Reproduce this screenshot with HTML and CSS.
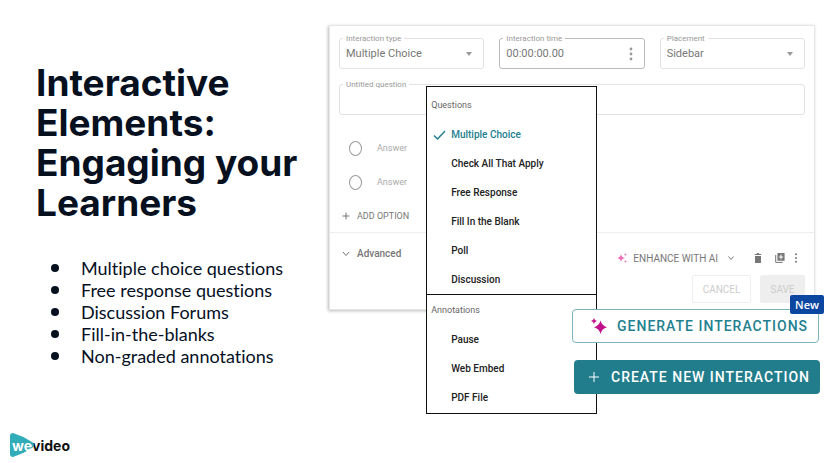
FILE: index.html
```html
<!DOCTYPE html>
<html lang="en">
<head>
  <meta charset="UTF-8">
  <meta name="viewport" content="width=device-width, initial-scale=1.0">
  <title>Interactive Elements</title>
  <link rel="stylesheet" href="styles.css">
</head>
<body>
  <main class="slide">
    <section class="intro">
      <h1>Interactive Elements: Engaging your Learners</h1>
      <ul class="points">
        <li>Multiple choice questions</li>
        <li>Free response questions</li>
        <li>Discussion Forums</li>
        <li>Fill-in-the-blanks</li>
        <li>Non-graded annotations</li>
      </ul>
    </section>

    <section class="demo">
      <form class="card">
        <div class="fields">
          <div class="field">
            <label for="type">Interaction type</label>
            <select id="type"><option>Multiple Choice</option></select>
            <svg class="caret" viewBox="0 0 6 4"><path d="M0 0h6L3 4z"/></svg>
          </div>
          <div class="field field-time">
            <label for="time">Interaction time</label>
            <input id="time" type="text" value="00:00:00.00">
            <svg class="dots" viewBox="0 0 4 14"><circle cx="2" cy="2" r="1.4"/><circle cx="2" cy="7" r="1.4"/><circle cx="2" cy="12" r="1.4"/></svg>
          </div>
          <div class="field">
            <label for="placement">Placement</label>
            <select id="placement"><option>Sidebar</option></select>
            <svg class="caret" viewBox="0 0 6 4"><path d="M0 0h6L3 4z"/></svg>
          </div>
        </div>
        <div class="field">
          <label for="question">Untitled question</label>
          <input id="question" type="text">
        </div>

        <div class="answers">
          <label class="answer"><input type="radio" name="answer">Answer</label>
          <label class="answer"><input type="radio" name="answer">Answer</label>
        </div>
        <button type="button" class="add">
          <svg viewBox="0 0 8 8"><path d="M4 0.5v7M0.5 4h7"/></svg>ADD OPTION
        </button>

        <div class="bottom">
          <button type="button" class="advanced">
            <svg viewBox="0 0 8 8"><path d="M1 2l3 3.500L7 2"/></svg>Advanced
          </button>
          <div class="tools">
            <div class="icons">
              <button type="button" class="enhance">
                <svg class="spark" viewBox="0 0 10 12"><path d="M4 2Q4.500 5.500 8 6Q4.500 6.500 4 10Q3.500 6.500 0 6Q3.500 5.500 4 2zM8.500 1l.4 1.100 1.100.4-1.100.4-.4 1.100-.4-1.100L7 2.500l1.100-.4zM8.500 8l.4 1.100 1.100.4-1.100.4-.4 1.100-.4-1.100L7 9.500l1.100-.4z"/></svg>
                ENHANCE WITH AI
                <svg class="chevron" viewBox="0 0 8 8"><path d="M1.500 2.500L4 5.500l2.500-3"/></svg>
              </button>
              <button type="button" class="icon" aria-label="Delete">
                <svg viewBox="0 0 10 10"><path d="M2 3h6v7H2zM1.800 .9h1.800L4.200 0h1.600l.6.9h1.800v1.200H1.800z"/></svg>
              </button>
              <button type="button" class="icon" aria-label="Duplicate">
                <svg viewBox="0 0 10 10"><path fill-rule="evenodd" d="M2.400 0h7.200v7.800H2.400zM5.500 1.600v1.800H3.900v1h1.600v1.800h1V4.400h1.600v-1H6.500V1.600z"/><path d="M.7 2v7.400h7" fill="none" stroke="#777"/></svg>
              </button>
              <button type="button" class="icon" aria-label="More">
                <svg viewBox="0 0 10 10"><circle cx="5" cy="1.200" r="1"/><circle cx="5" cy="5" r="1"/><circle cx="5" cy="8.800" r="1"/></svg>
              </button>
            </div>
            <div class="actions">
              <button type="button" class="cancel">CANCEL</button>
              <button type="button" class="save">SAVE</button>
            </div>
          </div>
        </div>
      </form>

      <div class="menu">
        <div class="group">
          <h2>Questions</h2>
          <button type="button" class="selected">
            <svg viewBox="0 0 13 10"><path d="M1 5.500l3.500 3.500L12 1"/></svg>Multiple Choice
          </button>
          <button type="button">Check All That Apply</button>
          <button type="button">Free Response</button>
          <button type="button">Fill In the Blank</button>
          <button type="button">Poll</button>
          <button type="button">Discussion</button>
        </div>
        <div class="group">
          <h2>Annotations</h2>
          <button type="button">Pause</button>
          <button type="button">Web Embed</button>
          <button type="button">PDF File</button>
        </div>
      </div>

      <div class="cta">
        <button type="button" class="generate">
          <svg viewBox="0 0 16 16"><path d="M9.500 2.500Q10.800 7.900 16 9.200Q10.800 10.500 9.500 16Q8.200 10.500 3 9.200Q8.200 7.900 9.500 2.500zM3 0Q3.500 2.500 6 3Q3.500 3.500 3 6Q2.500 3.500 0 3Q2.500 2.500 3 0z"/></svg>
          GENERATE INTERACTIONS
          <span class="badge">New</span>
        </button>
        <button type="button" class="create">
          <svg viewBox="0 0 10 10"><path d="M5 0v10M0 5h10"/></svg>
          CREATE NEW INTERACTION
        </button>
      </div>
    </section>

    <footer class="logo">
      <svg class="play" viewBox="0 0 24 24"><path d="M3 0Q0 0 0 3v18q0 3 3 3Q13 21 22 15q4-3 0-6Q13 3 3 0z"/></svg>
      <span class="we">we</span><span>video</span>
    </footer>
  </main>
</body>
</html>
```
FILE: styles.css
```css
* {
  box-sizing: border-box;
}
body {
  margin: 0;
  background-color: #fff;
  font-family: Roboto, "Liberation Sans", sans-serif;
}
button, input, select {
  font-family: inherit;
  margin: 0;
}
button {
  border: none;
  padding: 0;
  background-color: transparent;
  cursor: pointer;
  white-space: nowrap;
}
svg {
  display: block;
  flex: none;
}
.slide {
  display: grid;
  grid-template-columns: minmax(0, 329fr) minmax(0, 486fr) minmax(0, 13fr);
  grid-template-rows: 1fr auto;
  min-height: 100vh;
}

/* left side */
.intro {
  padding: 63px 24px 0 36px;
  color: #06101f;
}
h1 {
  margin: 0 0 34px;
  font-family: Inter, sans-serif;
  font-size: 37px;
  line-height: 40px;
  font-weight: 700;
}
.points {
  margin: 0;
  padding: 0;
  list-style: none;
  font-family: Lato, sans-serif;
  font-size: 18px;
  line-height: 22px;
  font-variant-ligatures: none;
}
.points li {
  display: flex;
  align-items: center;
  gap: 22px;
  padding-left: 15px;
}
.points li::before {
  content: "";
  width: 8px;
  height: 8px;
  border-radius: 50%;
  background-color: #06101f;
}
.logo {
  grid-column: 1;
  position: relative;
  display: flex;
  align-items: center;
  height: 24px;
  margin: 0 0 6px 10px;
  padding-left: 2px;
  font-family: Inter, sans-serif;
  font-size: 14px;
  font-weight: 700;
  color: #111;
}
.play {
  position: absolute;
  left: 0;
  top: 0;
  width: 24px;
  height: 24px;
  fill: #31adba;
}
.we {
  position: relative;
  color: #fff;
}

/* question form */
.demo {
  grid-row: 1 / 3;
  grid-column: 2;
  position: relative;
  padding-top: 25px;
}
.card {
  border: 1px solid #e6e6e6;
  box-shadow: -1px 1px 3px #bbb;
  padding: 12px 9px 6px;
}
.fields {
  display: grid;
  grid-template-columns: 1fr 1fr 1fr;
  gap: 15px;
  margin-bottom: 15px;
}
.field {
  position: relative;
}
.field label {
  position: absolute;
  left: 4px;
  top: -4px;
  padding: 0 3px;
  background-color: #fff;
  font-size: 8px;
  line-height: 10px;
  color: #999;
}
.field input, .field select {
  display: block;
  width: 100%;
  height: 31px;
  padding: 0 6px;
  border: 1px solid #e2e2e2;
  border-radius: 3px;
  background-color: #fff;
  appearance: none;
  font-size: 11px;
  color: #777;
}
.field-time input {
  border-color: #bbb;
}
.caret, .dots {
  position: absolute;
  right: 12px;
  top: 14px;
  width: 6px;
  height: 4px;
  fill: #999;
}
.dots {
  top: 9px;
  width: 4px;
  height: 14px;
}
.answers {
  margin: 16px 0 0 10px;
}
.answer {
  display: flex;
  align-items: center;
  gap: 15px;
  height: 34px;
  font-size: 9px;
  color: #aaa;
}
.answer input {
  appearance: none;
  width: 13px;
  height: 15px;
  margin: 0;
  border: 1px solid #999;
  border-radius: 50%;
}
.add, .advanced {
  display: flex;
  align-items: center;
  gap: 7px;
  height: 33px;
  padding-left: 3px;
  font-size: 9px;
  color: #777;
}
.add svg, .advanced svg {
  width: 8px;
  height: 8px;
  fill: none;
  stroke: #777;
}
.bottom {
  display: flex;
  justify-content: space-between;
  margin: 0 -9px;
  padding: 4px 9px 0;
  border-top: 1px solid #eee;
}
.advanced {
  font-size: 10px;
  font-weight: 500;
}
.tools {
  padding-top: 8px;
}
.icons {
  display: flex;
  align-items: center;
  justify-content: flex-end;
  gap: 12px;
  height: 26px;
  padding-right: 4px;
}
.enhance {
  display: flex;
  align-items: center;
  gap: 6px;
  margin-right: 6px;
  font-size: 10px;
  color: #777;
}
.spark {
  width: 10px;
  height: 12px;
  fill: #ef6fb4;
}
.chevron {
  width: 8px;
  height: 8px;
  margin-left: 3px;
  fill: none;
  stroke: #777;
}
.icon svg {
  width: 10px;
  height: 10px;
  fill: #777;
}
.icon:last-child {
  margin-left: -6px;
}
.actions {
  display: flex;
  justify-content: flex-end;
  gap: 9px;
  margin-top: 4px;
}
.cancel, .save {
  width: 59px;
  height: 28px;
  border: 1px solid #eee;
  border-radius: 2px;
  font-size: 10px;
  color: #ccc;
}
.save {
  width: 45px;
  background-color: #eee;
}

/* type picker */
.menu {
  position: absolute;
  left: 20%;
  top: 86px;
  width: 171px;
  border: 1px solid #111;
  background-color: #fff;
}
.group {
  padding-top: 4px;
}
.group + .group {
  padding: 1px 0;
  border-top: 1px solid #111;
}
.group h2 {
  margin: 0;
  padding-left: 4px;
  font-size: 9px;
  line-height: 29px;
  font-weight: 400;
  color: #666;
}
.group button {
  display: flex;
  align-items: center;
  width: 100%;
  height: 29px;
  padding-left: 24px;
  font-size: 10px;
  font-weight: 500;
  color: #222;
}
.group .selected {
  gap: 5px;
  padding-left: 6px;
  color: #23808f;
}
.selected svg {
  width: 13px;
  height: 10px;
  fill: none;
  stroke: #23808f;
  stroke-width: 1.5;
}

/* big buttons */
.cta {
  position: absolute;
  left: 50%;
  right: -5px;
  top: 309px;
  display: grid;
  gap: 17px;
}
.cta button {
  position: relative;
  display: flex;
  align-items: center;
  height: 34px;
  border-radius: 4px;
  font-size: 14px;
  font-weight: 500;
  letter-spacing: 1px;
}
.generate {
  gap: 10px;
  margin-right: 1px;
  padding-left: 18px;
  border: 1px solid #78b4be;
  background-color: #fff;
  color: #23808f;
}
.generate svg {
  width: 16px;
  height: 16px;
  fill: #c2108c;
}
.create {
  gap: 12px;
  margin-left: 2px;
  padding-left: 15px;
  background-color: #217d8c;
  color: #fff;
}
.create svg {
  width: 10px;
  height: 10px;
  stroke: #fff;
}
.badge {
  position: absolute;
  right: -6px;
  top: -15px;
  width: 34px;
  background-color: #0b46a0;
  border-radius: 2px;
  font-family: "Open Sans", sans-serif;
  font-size: 11px;
  line-height: 19px;
  font-weight: 600;
  letter-spacing: 0;
  color: #fff;
}
```
